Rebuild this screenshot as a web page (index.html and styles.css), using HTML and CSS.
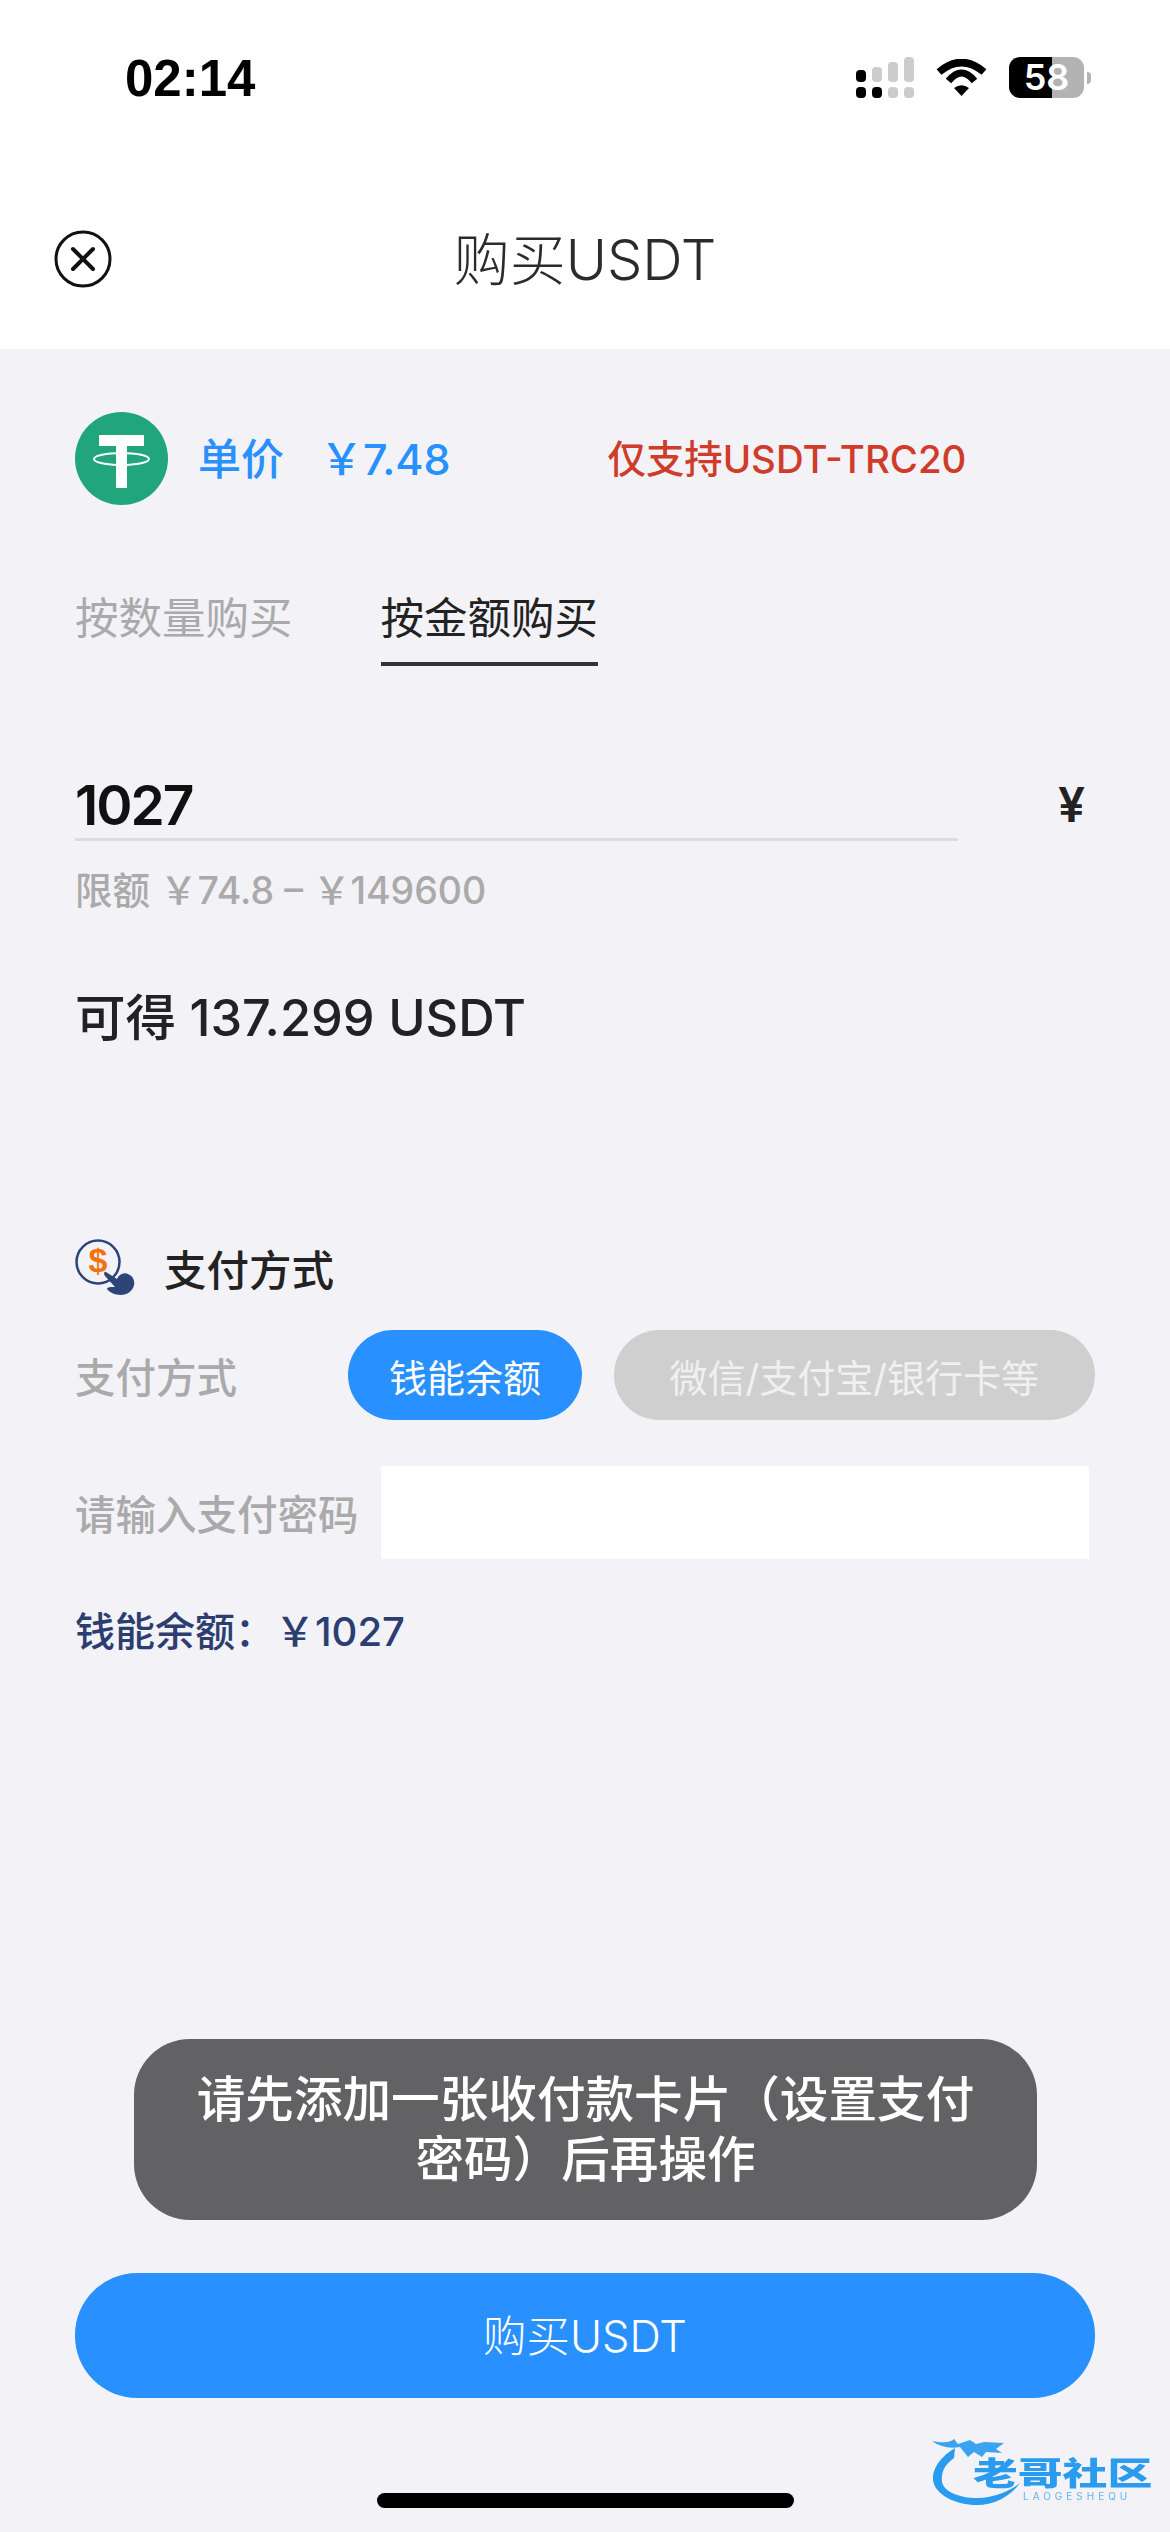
FILE: index.html
```html
<!DOCTYPE html>
<html lang="zh-CN">
<head>
  <meta charset="UTF-8">
  <meta name="viewport" content="width=device-width, initial-scale=1.0">
  <title>购买USDT</title>
  <link rel="stylesheet" href="styles.css">
</head>
<body>

<header class="top">
  <div class="status">
    <span class="time">02:14</span>
    <div class="status-icons">
      <svg class="signal" width="58" height="41" viewBox="0 0 58 41">
        <rect x="0" y="13" width="10" height="12" rx="4" fill="#000"/>
        <rect x="16" y="10" width="10" height="15" rx="4" fill="#ccc"/>
        <rect x="32" y="5" width="10" height="20" rx="4" fill="#ccc"/>
        <rect x="48" y="0" width="10" height="25" rx="4" fill="#ccc"/>
        <rect x="0" y="30" width="10" height="11" rx="4" fill="#000"/>
        <rect x="16" y="30" width="10" height="11" rx="4" fill="#000"/>
        <rect x="32" y="30" width="10" height="11" rx="4" fill="#ccc"/>
        <rect x="48" y="30" width="10" height="11" rx="4" fill="#ccc"/>
      </svg>
      <svg class="wifi" width="51" height="37" viewBox="0 0 51 37">
        <path d="M3 13Q25.500 -6 48 13" fill="none" stroke="#000" stroke-width="7.500"/>
        <path d="M12.500 22Q25.500 6 38.500 22" fill="none" stroke="#000" stroke-width="7"/>
        <path d="M18 29Q25.500 23.500 33 29L25.500 37Z" fill="#000"/>
      </svg>
      <div class="battery">58</div>
    </div>
  </div>
  <div class="nav">
    <svg class="close" width="58" height="58" viewBox="0 0 58 58">
      <circle cx="29" cy="29" r="27" fill="none" stroke="#111" stroke-width="3"/>
      <path d="M19 19L39 39M39 19L19 39" fill="none" stroke="#111" stroke-width="4" stroke-linecap="round"/>
    </svg>
    <h1>购买USDT</h1>
  </div>
</header>

<main class="content">
  <div class="price-row">
    <svg class="tether" width="93" height="93" viewBox="0 0 93 93">
      <circle cx="46.500" cy="46.500" r="46.500" fill="#20a67a"/>
      <path d="M24 23H69V34H52V76H41V34H24Z" fill="#fff"/>
      <ellipse cx="46.500" cy="47" rx="27.500" ry="6" fill="none" stroke="#fff" stroke-width="2"/>
    </svg>
    <span class="price-label">单价</span>
    <span class="price-value">￥7.48</span>
    <span class="price-note">仅支持USDT-TRC20</span>
  </div>

  <div class="tabs">
    <div class="tab">按数量购买</div>
    <div class="tab active">按金额购买</div>
  </div>

  <div class="amount-row">
    <div class="amount">1027</div>
    <div class="unit">¥</div>
  </div>
  <div class="limit">限额 ￥74.8 – ￥149600</div>
  <div class="gets">可得 137.299 USDT</div>

  <div class="pay-title">
    <svg class="pay-icon" width="60" height="57" viewBox="0 0 60 57">
      <circle cx="23" cy="23" r="21.500" fill="none" stroke="#2c4478" stroke-width="2.500"/>
      <text x="23" y="33" text-anchor="middle" class="dollar">$</text>
      <path d="M31 33L42 40C44 35 50 33 53 35C58 37 60 42 59 46C58 52 52 56 46 56C40 56 34 53 32 50C32 48 36 48 40 48L30 37C28 34 30 32 31 33Z" fill="#2c4478"/>
    </svg>
    <span>支付方式</span>
  </div>

  <div class="pay-row">
    <div class="pay-label">支付方式</div>
    <div class="pill pill-on">钱能余额</div>
    <div class="pill pill-off">微信/支付宝/银行卡等</div>
  </div>

  <div class="password-row">
    <div class="password-label">请输入支付密码</div>
    <div class="password-input"></div>
  </div>

  <div class="balance">钱能余额：￥1027</div>

  <button class="buy">购买USDT</button>
</main>

<div class="toast">请先添加一张收付款卡片（设置支付密码）后再操作</div>

<div class="watermark">
  <svg class="dragon" width="100" height="74" viewBox="0 0 100 74">
    <path d="M23 15C8 24 0 36 1 47C3 62 24 72 45 72C62 72 78 64 88 50C78 58 62 65 45 65C28 65 12 59 10 49C9 40 12 32 22 25Z" fill="#2a9cf0"/>
    <path d="M0 8C10 10 18 10 22 6L26 11L38 7L44 11L52 9L72 10L64 16L70 20L54 19L50 24L42 19L36 24L28 14C18 16 8 14 0 8Z" fill="#3ba4f2"/>
  </svg>
  <div class="wm-name">老哥社区</div>
  <div class="wm-sub">LAOGESHEQU</div>
</div>

<div class="home-bar"></div>

</body>
</html>
```

FILE: styles.css
```css
* {
  box-sizing: border-box;
}
body {
  position: relative;
  display: flex;
  flex-direction: column;
  width: 1170px;
  height: 2532px;
  margin: 0;
  overflow: hidden;
  background-color: #f2f2f7;
  font-family: Inter, "Noto Sans CJK SC", sans-serif;
  color: #222;
}

/* Topo */
.top {
  height: 349px;
  background-color: white;
}
.status {
  display: flex;
  justify-content: space-between;
  height: 169px;
  padding: 58px 86px 0 125px;
}
.time {
  font-family: "Liberation Sans", sans-serif;
  font-size: 51px;
  font-weight: bold;
  line-height: 41px;
  color: black;
}
.status-icons {
  display: flex;
  align-items: flex-start;
  gap: 22px;
  height: 41px;
  margin-top: -1px;
}
.wifi {
  margin-top: 2px;
}
.battery {
  position: relative;
  width: 75px;
  height: 41px;
  border-radius: 11px;
  background: linear-gradient(90deg, #000 57%, #b3b3b3 57%);
  color: white;
  font-family: Inter, sans-serif;
  font-size: 36px;
  font-weight: 600;
  line-height: 41px;
  text-align: center;
}
.battery::after {
  content: "";
  position: absolute;
  left: 78px;
  top: 15px;
  width: 4px;
  height: 12px;
  border-radius: 0 6px 6px 0;
  background-color: #b3b3b3;
}
.nav {
  display: flex;
  align-items: center;
  justify-content: center;
  position: relative;
  height: 180px;
}
.close {
  position: absolute;
  left: 54px;
  top: 61px;
}
.nav h1 {
  margin: 0 0 8px;
  font-size: 56px;
  font-weight: 300;
  color: #2b2b2b;
}

/* Conteudo */
.content {
  display: flex;
  flex-direction: column;
  flex: 1;
  padding: 0 75px 134px;
}
.price-row {
  display: flex;
  align-items: center;
  height: 93px;
  margin-top: 63px;
}
.price-label {
  margin: 0 0 6px 30px;
  font-size: 43px;
  font-weight: 500;
  color: #2890ff;
}
.price-value {
  margin: 0 0 6px 36px;
  font-size: 43px;
  font-weight: 500;
  color: #2890ff;
}
.price-note {
  margin: 0 0 6px 157px;
  font-size: 38.400px;
  font-weight: 500;
  color: #d03c2a;
}
.tabs {
  display: flex;
  gap: 88px;
  margin-top: 85px;
}
.tab {
  height: 76px;
  font-size: 43.500px;
  line-height: 56px;
  color: #aaa;
}
.tab.active {
  border-bottom: 4px solid #333;
  color: #222;
}
.amount-row {
  display: flex;
  align-items: center;
  gap: 100px;
  margin-top: 100px;
}
.amount {
  width: 883px;
  height: 75px;
  padding-top: 6px;
  border-bottom: 3px solid #ddd;
  font-size: 55px;
  font-weight: 600;
  letter-spacing: -2px;
  line-height: 66px;
  color: #111;
}
.unit {
  margin-bottom: -3px;
  font-size: 48px;
  font-weight: 600;
  line-height: 66px;
}
.limit {
  margin-top: 25px;
  font-size: 37.500px;
  font-weight: 500;
  line-height: 50px;
  color: #aaa;
}
.gets {
  margin-top: 72px;
  font-size: 50.500px;
  font-weight: 500;
  line-height: 60px;
  color: #222;
}
.pay-title {
  display: flex;
  align-items: center;
  gap: 29px;
  height: 57px;
  margin-top: 191px;
  font-size: 42.500px;
  font-weight: 500;
}
.dollar {
  font-family: "Liberation Sans", sans-serif;
  font-size: 34px;
  font-weight: bold;
  fill: #f4730e;
}
.pay-row {
  display: flex;
  align-items: center;
  gap: 32px;
  margin-top: 34px;
}
.pay-label {
  width: 242px;
  font-size: 40.500px;
  font-weight: 500;
  color: #aaa;
}
.pill {
  display: flex;
  align-items: center;
  justify-content: center;
  height: 90px;
  border-radius: 45px;
  font-size: 38px;
}
.pill-on {
  width: 234px;
  background-color: #2890ff;
  color: white;
}
.pill-off {
  width: 483px;
  background-color: #cfcfcf;
  color: #f0f0f0;
}
.password-row {
  display: flex;
  align-items: center;
  margin-top: 46px;
}
.password-label {
  width: 306px;
  font-size: 40.500px;
  font-weight: 500;
  color: #aaa;
}
.password-input {
  width: 708px;
  height: 93px;
  background-color: white;
}
.balance {
  margin-top: 48px;
  font-size: 40px;
  font-weight: 500;
  line-height: 50px;
  color: #2c3e70;
}
.buy {
  width: 1020px;
  height: 125px;
  margin-top: auto;
  padding-bottom: 5px;
  border: none;
  border-radius: 62px;
  background-color: #2890ff;
  color: white;
  font-family: inherit;
  font-size: 43.500px;
  font-weight: 300;
}

/* Sobrepostos */
.toast {
  position: absolute;
  left: 134px;
  top: 2039px;
  display: flex;
  align-items: center;
  justify-content: center;
  width: 903px;
  height: 181px;
  padding: 0 60px;
  border-radius: 56px;
  background-color: #626264;
  color: white;
  font-size: 48.600px;
  font-weight: 500;
  line-height: 60px;
  text-align: center;
}
.home-bar {
  position: absolute;
  left: 377px;
  top: 2493px;
  width: 417px;
  height: 15px;
  border-radius: 8px;
  background-color: black;
}
.watermark {
  position: absolute;
  left: 932px;
  top: 2433px;
  width: 225px;
  height: 74px;
  filter: blur(0.7px);
}
.dragon {
  position: absolute;
  left: 0;
  top: 0;
}
.wm-name {
  position: absolute;
  left: 41px;
  top: 25px;
  font-size: 32px;
  font-weight: 900;
  line-height: 32px;
  white-space: nowrap;
  color: #2a9cf0;
  transform: scaleX(1.4);
  transform-origin: left center;
}
.wm-sub {
  position: absolute;
  left: 91px;
  top: 58px;
  font-size: 10px;
  letter-spacing: 4px;
  line-height: 10px;
  white-space: nowrap;
  color: #5fb4f0;
}
```
